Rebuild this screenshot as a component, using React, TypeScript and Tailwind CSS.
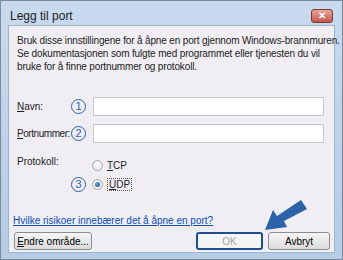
import type { ReactNode } from "react"

function Num({ n }: { n: string }) {
  return (
    <div className="w-[15px] h-[15px] shrink-0 rounded-full border-[1.5px] border-[#2a63ad] flex items-center justify-center text-[11px] leading-none text-[#2a63ad]">
      {n}
    </div>
  )
}

function Radio({ checked }: { checked?: boolean }) {
  return (
    <div className="w-[11px] h-[11px] shrink-0 rounded-full border border-[#a4a8ae] bg-[radial-gradient(circle,#ffffff,#e0e2e6)] flex items-center justify-center">
      {checked && <div className="w-[5px] h-[5px] rounded-full bg-[radial-gradient(circle_at_35%_35%,#6aa0da,#1d4f8a)]" />}
    </div>
  )
}

function Button({ children, focused, disabled, w }: { children: ReactNode; focused?: boolean; disabled?: boolean; w: string }) {
  return (
    <div
      className={`${w} h-[18px] shrink-0 whitespace-nowrap rounded-[3px] flex items-center justify-center text-[10px] ${
        focused ? "border-2 border-[#1f4f8c]" : "border border-[#8a8d92]"
      } ${disabled ? "text-[#a5a5a5] bg-[#f4f4f4]" : "text-black bg-[linear-gradient(#f5f5f5,#dcdcdc)]"}`}
    >
      {children}
    </div>
  )
}

export default function App() {
  return (
    <div
      className="relative w-[343px] h-[260px] overflow-hidden bg-[linear-gradient(#c8daee,#b4cce6)] border border-[#7d8996] flex flex-col text-[#222] whitespace-nowrap"
      style={{ fontFamily: "'Liberation Sans', Arial, sans-serif" }}
    >
      <div className="h-[24px] shrink-0 flex items-center justify-between pl-[9px] pr-[9px]">
        <div className="text-[12px] pt-[5px]">Legg til port</div>
        <div className="w-[22px] h-[14px] mt-[6px] rounded-[3px] border border-[#7a3a33] bg-[linear-gradient(#e7a79d,#c4554a)] flex items-center justify-center text-white text-[10px] font-bold leading-none">
          ✕
        </div>
      </div>
      <div className="mx-[7px] mb-[6px] flex-1 bg-[#f0eef3] border border-[#9fb5cc] flex flex-col px-[8px]">
        <div className="pt-[8px] text-[10px] leading-[13px] tracking-[-0.15px]">
          Bruk disse innstillingene for å åpne en port gjennom Windows-brannmuren.
          <br />
          Se dokumentasjonen som fulgte med programmet eller tjenesten du vil
          <br />
          bruke for å finne portnummer og protokoll.
        </div>

        <div className="mt-[24px] flex items-center h-[19px]">
          <div className="w-[54px] text-[10px]">
            <span className="underline">N</span>avn:
          </div>
          <Num n="1" />
          <div className="ml-[7px] w-[231px] h-[19px] bg-white border border-[#c5c8cd]" />
        </div>

        <div className="mt-[8px] flex items-center h-[19px]">
          <div className="w-[54px] text-[10px] tracking-[-0.45px]">
            <span className="underline">P</span>ortnummer:
          </div>
          <Num n="2" />
          <div className="ml-[7px] w-[231px] h-[19px] bg-white border border-[#c5c8cd]" />
        </div>

        <div className="mt-[13px] flex items-start h-[14px]">
          <div className="w-[54px] text-[10px] leading-[12px]">Protokoll:</div>
          <div className="w-[15px]" />
          <div className="flex items-center gap-[4px] h-[12px] ml-[6px] mt-[3px]">
            <Radio />
            <span className="text-[10px]">
              <span className="underline">T</span>CP
            </span>
          </div>
        </div>

        <div className="mt-[7px] flex items-center h-[15px]">
          <div className="w-[54px]" />
          <Num n="3" />
          <div className="ml-[6px] flex items-center gap-[4px]">
            <Radio checked />
            <span className="text-[10px] border border-dotted border-[#555] px-[1px] leading-[11px]">
              <span className="underline">U</span>DP
            </span>
          </div>
        </div>

        <div className="mt-[23px] text-[10px] leading-[12px] text-[#0a4fb0] underline -ml-[4px]">
          Hvilke risikoer innebærer det å åpne en port?
        </div>

        <div className="mt-[5px] flex items-center -ml-[3px] -mr-[4px]">
          <Button w="w-[78px]">
            <span>
              <span className="underline">E</span>ndre område...
            </span>
          </Button>
          <div className="flex-1" />
          <Button w="w-[67px]" focused disabled>
            OK
          </Button>
          <div className="w-[5px]" />
          <Button w="w-[62px]">Avbryt</Button>
        </div>
      </div>

      <svg className="absolute left-[260px] top-[195px]" width="48" height="38" viewBox="0 0 48 38">
        <polygon points="40,4 46,13 23,25 26,31 4,34 12,14 16,20" fill="#2b62a8" />
      </svg>
    </div>
  )
}
